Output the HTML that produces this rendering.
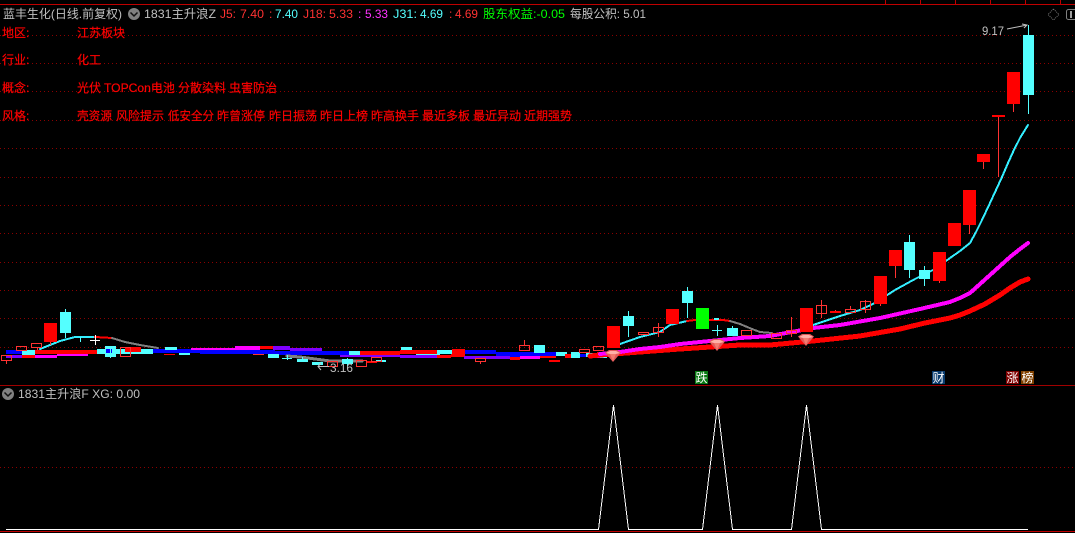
<!DOCTYPE html>
<html><head><meta charset="utf-8">
<style>
html,body{margin:0;padding:0;background:#000;width:1075px;height:533px;overflow:hidden}
svg{display:block}
text{font-family:"Liberation Sans","WenQuanYi Zen Hei","Noto Sans CJK SC",sans-serif;font-size:12px;white-space:pre}
.g{fill:#c0c0c0}.r{fill:#ff3232}.R{fill:#ff0000;stroke:#ff0000;stroke-width:.2}.c{fill:#54ffff}.m{fill:#ff32ff}.n{fill:#00ff00}
</style></head><body>
<svg width="1075" height="533" viewBox="0 0 1075 533" xmlns="http://www.w3.org/2000/svg">
<defs><pattern id="dots" x="0" y="0" width="4" height="4" patternUnits="userSpaceOnUse"><rect x="0" y="0" width="1" height="4" fill="#8b0000"/></pattern></defs>
<rect width="1075" height="533" fill="#000"/>
<!-- frame -->
<g shape-rendering="crispEdges">
<rect x="0" y="4" width="1075" height="1" fill="#c00000"/>
<rect x="885" y="0" width="1" height="4" fill="#c00000"/><rect x="920" y="0" width="1" height="4" fill="#c00000"/><rect x="955" y="0" width="1" height="4" fill="#c00000"/><rect x="990" y="0" width="1" height="4" fill="#c00000"/><rect x="1025" y="0" width="1" height="4" fill="#c00000"/><rect x="1060" y="0" width="1" height="4" fill="#c00000"/>
<rect x="0" y="385" width="1075" height="1" fill="#a00000"/>
<rect x="0" y="531" width="1075" height="1" fill="#c00000"/>
<g fill="url(#dots)">
<rect x="0" y="35" width="1075" height="1"/><rect x="0" y="63" width="1075" height="1"/><rect x="0" y="91" width="1075" height="1"/><rect x="0" y="120" width="1075" height="1"/><rect x="0" y="148" width="1075" height="1"/><rect x="0" y="177" width="1075" height="1"/><rect x="0" y="205" width="1075" height="1"/><rect x="0" y="233" width="1075" height="1"/><rect x="0" y="262" width="1075" height="1"/><rect x="0" y="290" width="1075" height="1"/><rect x="0" y="318" width="1075" height="1"/><rect x="0" y="347" width="1075" height="1"/><rect x="0" y="467" width="1075" height="1"/>
</g>
</g>

<!-- left band -->
<g shape-rendering="crispEdges">
<rect x="6" y="355" width="16" height="3" fill="#7f00ff"/>
<rect x="22" y="355" width="13" height="3" fill="#ff0000"/>
<rect x="35" y="355" width="22" height="3" fill="#ff00ff"/>
<rect x="57" y="353" width="31" height="3" fill="#ff00ff"/>
<rect x="6" y="350" width="16" height="4" fill="#0000ff"/>
<rect x="22" y="350" width="13" height="5" fill="#54ffff"/>
<rect x="35" y="350" width="62" height="4" fill="#ff0000"/>
<rect x="97" y="349" width="56" height="5" fill="#54ffff"/>
<rect x="125" y="347" width="16" height="5" fill="#ff0000"/>
<rect x="105" y="346" width="11" height="11" fill="#54ffff"/>
<rect x="106" y="349" width="6" height="4" fill="#0000ff"/>
<rect x="153" y="349" width="47" height="4" fill="#0000ff"/>
<rect x="165" y="347" width="12" height="3" fill="#54ffff"/>
<rect x="179" y="353" width="11" height="2" fill="#54ffff"/>
<rect x="191" y="348" width="9" height="2" fill="#ff00ff"/>
<rect x="200" y="348" width="35" height="2" fill="#ff00ff"/>
<rect x="235" y="346" width="25" height="4" fill="#ff00ff"/>
<rect x="260" y="346" width="13" height="3" fill="#ff0000"/>
<rect x="273" y="346" width="17" height="4" fill="#7f00ff"/>
<rect x="290" y="348" width="32" height="3" fill="#7f00ff"/>
<rect x="200" y="350" width="75" height="4" fill="#0000ff"/>
<rect x="275" y="351" width="75" height="4" fill="#0000ff"/>
<rect x="253" y="354" width="11" height="1" fill="#ff3232"/>
<rect x="349" y="351" width="13" height="4" fill="#54ffff"/>
<rect x="360" y="351" width="40" height="4" fill="#ff0000"/>
<rect x="340" y="355" width="60" height="2" fill="#7f00ff"/>
<rect x="400" y="350" width="37" height="4" fill="#ff0000"/>
<rect x="401" y="347" width="11" height="3" fill="#54ffff"/>
<rect x="416" y="354" width="24" height="1" fill="#54ffff"/>
<rect x="400" y="355" width="37" height="3" fill="#7f00ff"/>
<rect x="437" y="355" width="14" height="3" fill="#ff0000"/>
<rect x="437" y="350" width="15" height="4" fill="#54ffff"/>
<rect x="452" y="349" width="13" height="5" fill="#ff0000"/>
<rect x="465" y="350" width="31" height="4" fill="#0000ff"/>
<rect x="451" y="354" width="14" height="3" fill="#ff0000"/>
<rect x="464" y="356" width="46" height="3" fill="#7f00ff"/>
<rect x="496" y="352" width="14" height="4" fill="#0000ff"/>
<rect x="510" y="352" width="46" height="5" fill="#0000ff"/>
<rect x="510" y="357" width="10" height="3" fill="#ff0000"/>
<rect x="520" y="356" width="20" height="3" fill="#ff00ff"/>
<rect x="540" y="356" width="16" height="2" fill="#ff0000"/>
<rect x="556" y="352" width="11" height="4" fill="#54ffff"/>
<rect x="565" y="354" width="6" height="4" fill="#ff0000"/>
<rect x="571" y="352" width="9" height="6" fill="#54ffff"/>
<rect x="580" y="354" width="6" height="3" fill="#0000ff"/>
<rect x="586" y="353" width="11" height="4" fill="#54ffff"/>
<rect x="597" y="352" width="10" height="4" fill="#ff0000"/>
<rect x="592" y="356" width="15" height="2" fill="#ff00ff"/>
<rect x="600" y="353" width="7" height="5" fill="#54ffff"/>
</g>

<!-- moving averages -->
<g fill="none" shape-rendering="crispEdges" stroke-linecap="round" stroke-linejoin="round">
<polyline points="287,356 300,357 315,359 330,361 345,361 362,361" stroke="#808080" stroke-width="3"/>
<polyline points="40,349 50,345 60,341 75,337 95,337" stroke="#33eeff" stroke-width="2"/>
<polyline points="95,337 112,338" stroke="#ff0000" stroke-width="2"/>
<polyline points="112,338 125,342 140,345 158,348" stroke="#808080" stroke-width="2"/>
<polyline points="590,356 600,355 640,352 680,349 740,345 770,345 813,341 860,336 900,329 925,323 950,318 960,315 970,311 985,304 1000,295 1010,288 1020,282 1028,279" stroke="#ff0000" stroke-width="5"/>
<polyline points="600,354 620,352 640,349 660,347 680,344 710,341 740,338 770,336 813,328 840,325 880,318 920,309 950,302 960,298 970,293 980,284 990,275 1000,266 1010,257 1020,249 1028,243" stroke="#ff00ff" stroke-width="4"/>
<polyline points="620,344 640,337 660,332 670,325 687,321" stroke="#33eeff" stroke-width="2"/>
<polyline points="687,321 695,320 723,320 730,321" stroke="#ff0000" stroke-width="2"/>
<polyline points="730,321 740,324 752,329 760,332 772,333" stroke="#808080" stroke-width="2"/>
<polyline points="813,325 840,316 860,310 875,303 895,290 915,279 935,269 950,258 960,251 970,243 976,232 982,220 990,203 996,190 1002,177 1008,163 1013,152 1020,138 1028,125" stroke="#33eeff" stroke-width="2"/>
<rect x="714" y="318" width="5" height="2" fill="#54ffff" stroke="none"/>
</g>

<!-- candles -->
<g shape-rendering="crispEdges">
<!-- wicks -->
<g stroke="#ff3232" stroke-width="1" fill="none">
<path d="M6.500 361V364M37.500 347V350M50.500 342V345M658.500 323V337M791.500 317V337M821.500 300V318M835.500 310V311M850.500 306V309M865.500 300V313M880.500 304V306M895.500 266V278M939.500 281V283M969.500 225V234M983.500 162V169M998.500 116V177M1013.500 104V112M480.500 362V364M524.500 340V345"/>
</g>
<g stroke="#54ffff" stroke-width="1" fill="none">
<path d="M65.500 309V338M80.500 337V342M628.500 311V337M687.500 287V318M732.500 326V336M909.500 235V278M924.500 266V286M1028.500 25V114M110.500 346V358M287.500 355V360M282 358.500H292M302.500 357V362M717.500 325V336M712 330.500H722M347.500 358V366"/>
</g>
<!-- solid red -->
<g fill="#ff0000">
<rect x="44" y="323" width="13" height="19"/><rect x="607" y="326" width="13" height="22"/><rect x="666" y="309" width="13" height="15"/><rect x="800" y="308" width="13" height="24"/><rect x="830" y="311" width="11" height="2"/><rect x="874" y="276" width="13" height="28"/><rect x="889" y="250" width="13" height="16"/><rect x="933" y="252" width="13" height="29"/><rect x="948" y="223" width="13" height="23"/><rect x="963" y="190" width="13" height="35"/><rect x="977" y="154" width="13" height="8"/><rect x="992" y="115" width="13" height="2"/><rect x="1007" y="72" width="13" height="32"/><rect x="549" y="360" width="11" height="2"/><rect x="164" y="354" width="11" height="1"/><rect x="367" y="361" width="10" height="2"/>
</g>
<!-- solid cyan -->
<g fill="#54ffff">
<rect x="60" y="312" width="11" height="21"/><rect x="623" y="316" width="11" height="10"/><rect x="682" y="291" width="11" height="12"/><rect x="727" y="328" width="11" height="8"/><rect x="904" y="242" width="11" height="28"/><rect x="919" y="270" width="11" height="9"/><rect x="1023" y="35" width="11" height="60"/><rect x="534" y="345" width="11" height="8"/><rect x="268" y="354" width="11" height="4"/><rect x="297" y="359" width="11" height="3"/><rect x="312" y="362" width="11" height="3"/><rect x="342" y="359" width="11" height="5"/><rect x="376" y="360" width="10" height="2"/>
</g>
<rect x="696" y="308" width="13" height="21" fill="#00ff00"/>
<!-- hollow red -->
<g fill="none" stroke="#ff3232" stroke-width="1">
<rect x="1.500" y="355.500" width="10" height="5"/><rect x="16.500" y="346.500" width="10" height="4"/><rect x="31.500" y="343.500" width="10" height="4"/><rect x="120.500" y="347.500" width="10" height="9"/><rect x="327.500" y="361.500" width="10" height="5"/><rect x="356.500" y="360.500" width="10" height="6"/><rect x="371.500" y="357.500" width="10" height="4"/><rect x="475.500" y="358.500" width="10" height="3"/><rect x="519.500" y="345.500" width="10" height="5"/><rect x="579.500" y="349.500" width="10" height="3"/><rect x="593.500" y="346.500" width="10" height="4"/><rect x="638.500" y="332.500" width="10" height="2"/><rect x="653.500" y="327.500" width="10" height="5"/><rect x="741.500" y="330.500" width="10" height="5"/><rect x="771.500" y="333.500" width="10" height="5"/><rect x="786.500" y="330.500" width="10" height="3"/><rect x="816.500" y="305.500" width="10" height="8"/><rect x="845.500" y="309.500" width="10" height="3"/><rect x="860.500" y="301.500" width="10" height="8"/>
</g>
<!-- white crosses -->
<path d="M90 340.500H100M95.500 335V345" stroke="#ffffff" stroke-width="1"/>
</g>

<!-- gems -->
<g>
<g transform="translate(613,350)"><polygon points="-8,2.500 -4,0 4,0 8,2.500 0,12" fill="#e45858"/><polygon points="-7,3 -3,1 3,1 7,3 3,4 -3,4" fill="#ffb0a8"/><polygon points="-3,4 3,4 0,11" fill="#f47c70"/></g>
<g transform="translate(717,339)"><polygon points="-8,2.500 -4,0 4,0 8,2.500 0,12" fill="#e45858"/><polygon points="-7,3 -3,1 3,1 7,3 3,4 -3,4" fill="#ffb0a8"/><polygon points="-3,4 3,4 0,11" fill="#f47c70"/></g>
<g transform="translate(806,334)"><polygon points="-8,2.500 -4,0 4,0 8,2.500 0,12" fill="#e45858"/><polygon points="-7,3 -3,1 3,1 7,3 3,4 -3,4" fill="#ffb0a8"/><polygon points="-3,4 3,4 0,11" fill="#f47c70"/></g>
</g>

<!-- header -->
<text x="3" y="18" class="g" textLength="119" lengthAdjust="spacingAndGlyphs">蓝丰生化(日线.前复权)</text>
<circle cx="134" cy="14" r="6" fill="#808080"/>
<path d="M130.500 12.500L134 16L137.500 12.500" fill="none" stroke="#111" stroke-width="1.500"/>
<text x="144" y="18" class="g" textLength="72" lengthAdjust="spacingAndGlyphs">1831主升浪Z</text>
<text x="220" y="18" class="r" textLength="16" lengthAdjust="spacingAndGlyphs">J5:</text>
<text x="240" y="18" class="r" textLength="24" lengthAdjust="spacingAndGlyphs">7.40</text>
<text x="269" y="18" class="r">:</text>
<text x="275" y="18" class="c" textLength="23" lengthAdjust="spacingAndGlyphs">7.40</text>
<text x="303" y="18" class="r" textLength="23" lengthAdjust="spacingAndGlyphs">J18:</text>
<text x="329" y="18" class="r" textLength="24" lengthAdjust="spacingAndGlyphs">5.33</text>
<text x="358" y="18" class="m">:</text>
<text x="365" y="18" class="m" textLength="23" lengthAdjust="spacingAndGlyphs">5.33</text>
<text x="393" y="18" class="c" textLength="24" lengthAdjust="spacingAndGlyphs">J31:</text>
<text x="420" y="18" class="c" textLength="23" lengthAdjust="spacingAndGlyphs">4.69</text>
<text x="449" y="18" class="r">:</text>
<text x="455" y="18" class="r" textLength="23" lengthAdjust="spacingAndGlyphs">4.69</text>
<text x="483" y="18" class="n" textLength="82" lengthAdjust="spacingAndGlyphs">股东权益:-0.05</text>
<text x="570" y="18" class="g" textLength="76" lengthAdjust="spacingAndGlyphs">每股公积: 5.01</text>

<!-- region labels -->
<text x="2" y="37" class="R">地区:</text><text x="77" y="37" class="R">江苏板块</text>
<text x="2" y="64" class="R">行业:</text><text x="77" y="64" class="R">化工</text>
<text x="2" y="92" class="R">概念:</text><text x="77" y="92" class="R">光伏</text><text x="104" y="92" class="R" textLength="71" lengthAdjust="spacingAndGlyphs">TOPCon电池</text><text x="178" y="92" class="R">分散染料</text><text x="229" y="92" class="R">虫害防治</text>
<text x="2" y="120" class="R">风格:</text>
<text x="77" y="120" class="R" textLength="35" lengthAdjust="spacingAndGlyphs">壳资源</text><text x="116" y="120" class="R">风险提示</text><text x="168" y="120" class="R" textLength="46" lengthAdjust="spacingAndGlyphs">低安全分</text><text x="217" y="120" class="R">昨曾涨停</text><text x="269" y="120" class="R">昨日振荡</text><text x="320" y="120" class="R">昨日上榜</text><text x="371" y="120" class="R">昨高换手</text><text x="422" y="120" class="R">最近多板</text><text x="473" y="120" class="R">最近异动</text><text x="524" y="120" class="R">近期强势</text>

<!-- top right icons -->
<polygon points="1053.500,9 1059,14.500 1053.500,20 1048,14.500" fill="none" stroke="#707070" stroke-width="1" stroke-dasharray="1 1"/>
<rect x="1066.500" y="9.500" width="14" height="10" rx="2" fill="none" stroke="#808080"/>
<rect x="1070" y="11" width="2" height="7" fill="#a0a0a0"/>

<!-- price annotations -->
<text x="982" y="35" class="g" textLength="22" lengthAdjust="spacingAndGlyphs">9.17</text>
<path d="M1007 29L1027 25M1022 24L1027 25L1024 28" fill="none" stroke="#c0c0c0" stroke-width="1"/>
<text x="330" y="372" class="g" textLength="23" lengthAdjust="spacingAndGlyphs">3.16</text>
<path d="M329 366.500H318M321 363L318 366.500L321 370" fill="none" stroke="#c0c0c0" stroke-width="1"/>

<!-- tags -->
<g shape-rendering="crispEdges">
<rect x="695" y="371" width="13" height="13" fill="#0a7a14"/>
<rect x="932" y="371" width="13" height="13" fill="#0a3c6e"/>
<rect x="1006" y="371" width="13" height="13" fill="#7f0000"/>
<rect x="1021" y="371" width="13" height="13" fill="#7f4000"/>
</g>
<text x="695.500" y="382" fill="#fff">跌</text>
<text x="932.500" y="382" fill="#fff">财</text>
<text x="1006.500" y="382" fill="#fff">涨</text>
<text x="1021.500" y="382" fill="#fff">榜</text>

<!-- lower pane -->
<circle cx="8" cy="394" r="6" fill="#808080"/>
<path d="M4.500 392.500L8 396L11.500 392.500" fill="none" stroke="#111" stroke-width="1.500"/>
<text x="18" y="398" class="g" textLength="122" lengthAdjust="spacingAndGlyphs">1831主升浪F XG: 0.00</text>
<polyline shape-rendering="crispEdges" fill="none" stroke="#fff" stroke-width="1" points="6,529.500 598.500,529.500 613.500,405 628.500,529.500 702.500,529.500 717.500,405 732.500,529.500 791.500,529.500 806.500,405 821.500,529.500 1028,529.500"/>
</svg>
</body></html>
